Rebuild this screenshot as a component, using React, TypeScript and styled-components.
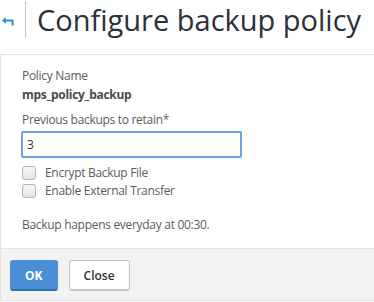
import React, { useState } from "react";
import styled, { createGlobalStyle } from "styled-components";

const GlobalStyle = createGlobalStyle`
  html, body {
    margin: 0;
    padding: 0;
    background: #ffffff;
  }
  body {
    font-family: "Open Sans", "Noto Sans", sans-serif;
    color: #555555;
  }
  * {
    box-sizing: border-box;
  }
`;

export default function App() {
  const [retain, setRetain] = useState("3");
  const [encrypt, setEncrypt] = useState(false);
  const [external, setExternal] = useState(false);

  return (
    <Page>
      <GlobalStyle />
      <Header>
        <BackButton aria-label="Back">
          <svg width="12" height="9" viewBox="0 0 12 9">
            <path d="M0 3.5 L3.8 0 L3.8 2.4 L11.6 2.4 L11.6 8.5 L9.6 8.5 L9.6 4.6 L3.8 4.6 L3.8 7 Z" fill="#3b86d0" />
          </svg>
        </BackButton>
        <Divider />
        <Title>Configure backup policy</Title>
      </Header>

      <Card>
        <CardBody>
          <FieldLabel>Policy Name</FieldLabel>
          <FieldValue>mps_policy_backup</FieldValue>
          <FieldLabel $gap>Previous backups to retain*</FieldLabel>
          <TextInput value={retain} onChange={(e) => setRetain(e.target.value)} />
          <CheckList>
            <CheckRow>
              <CheckBox type="checkbox" checked={encrypt} onChange={() => setEncrypt(!encrypt)} />
              Encrypt Backup File
            </CheckRow>
            <CheckRow>
              <CheckBox type="checkbox" checked={external} onChange={() => setExternal(!external)} />
              Enable External Transfer
            </CheckRow>
          </CheckList>
          <Note>Backup happens everyday at 00:30.</Note>
        </CardBody>
        <Footer>
          <Button $primary>OK</Button>
          <Button>Close</Button>
        </Footer>
      </Card>
    </Page>
  );
}

const Page = styled.div`
  width: 374px;
  height: 302px;
  overflow: hidden;
`;

const Header = styled.div`
  display: flex;
  align-items: center;
  height: 37px;
  margin-top: 1px;
`;

const BackButton = styled.button`
  display: flex;
  align-items: center;
  justify-content: flex-start;
  width: 25px;
  height: 100%;
  padding: 0 0 0 2px;
  margin: 0;
  border: none;
  background: none;
  cursor: pointer;
  svg {
    margin-top: 3px;
  }
`;

const Divider = styled.div`
  width: 1px;
  align-self: stretch;
  background: #c4c4c4;
`;

const Title = styled.h1`
  margin: 0 0 0 11px;
  font-family: "Open Sans", "Noto Sans", sans-serif;
  font-weight: 400;
  font-size: 29px;
  line-height: 37px;
  color: #2b303a;
  white-space: nowrap;
`;

const Card = styled.div`
  margin-top: 16px;
  border: 1px solid #e2e2e2;
  border-right: none;
  background: #ffffff;
`;

const CardBody = styled.div`
  display: flex;
  flex-direction: column;
  align-items: flex-start;
  padding: 13px 21px 15px;
  letter-spacing: -0.3px;
`;

const FieldLabel = styled.div<{ $gap?: boolean }>`
  font-size: 12px;
  line-height: 16px;
  color: #5c5c5c;
  margin-top: ${(p) => (p.$gap ? "9px" : "0")};
`;

const FieldValue = styled.div`
  font-size: 12px;
  line-height: 16px;
  font-weight: 700;
  color: #4a4a4a;
  margin-top: 3px;
`;

const TextInput = styled.input`
  width: 221px;
  height: 27px;
  margin: 3px 0 0 -1px;
  padding: 0 4px;
  border: 2px solid #6d9fe4;
  border-radius: 2px;
  font-family: inherit;
  font-size: 12px;
  color: #333333;
  outline: none;
`;

const CheckList = styled.div`
  display: flex;
  flex-direction: column;
  gap: 4px;
  margin-top: 8px;
`;

const CheckRow = styled.label`
  display: flex;
  align-items: center;
  gap: 9px;
  font-size: 12px;
  line-height: 14px;
  color: #5c5c5c;
  cursor: pointer;
`;

const CheckBox = styled.input`
  appearance: none;
  width: 14px;
  height: 14px;
  margin: 0;
  border: 1px solid #b5b5b5;
  border-radius: 3px;
  background: linear-gradient(#f7f7f7, #e6e6e6);
  &:checked {
    background: #3b86d0;
    border-color: #3b86d0;
  }
`;

const Note = styled.div`
  margin-top: 19px;
  font-size: 12px;
  line-height: 16px;
  color: #5c5c5c;
`;

const Footer = styled.div`
  display: flex;
  gap: 11px;
  padding: 11px 9px 9px;
  background: #f2f2f2;
  border-top: 1px solid #e2e2e2;
`;

const Button = styled.button<{ $primary?: boolean }>`
  height: 31px;
  padding: 0 14px;
  border-radius: 3px;
  font-family: inherit;
  font-size: 12px;
  font-weight: ${(p) => (p.$primary ? 700 : 600)};
  cursor: pointer;
  color: ${(p) => (p.$primary ? "#ffffff" : "#333333")};
  background: ${(p) => (p.$primary ? "#4a8fd6" : "#ffffff")};
  border: 1px solid ${(p) => (p.$primary ? "#4a8fd6" : "#c6c6c6")};
  border-bottom: 2px solid ${(p) => (p.$primary ? "#2f6fb3" : "#c6c6c6")};
`;
